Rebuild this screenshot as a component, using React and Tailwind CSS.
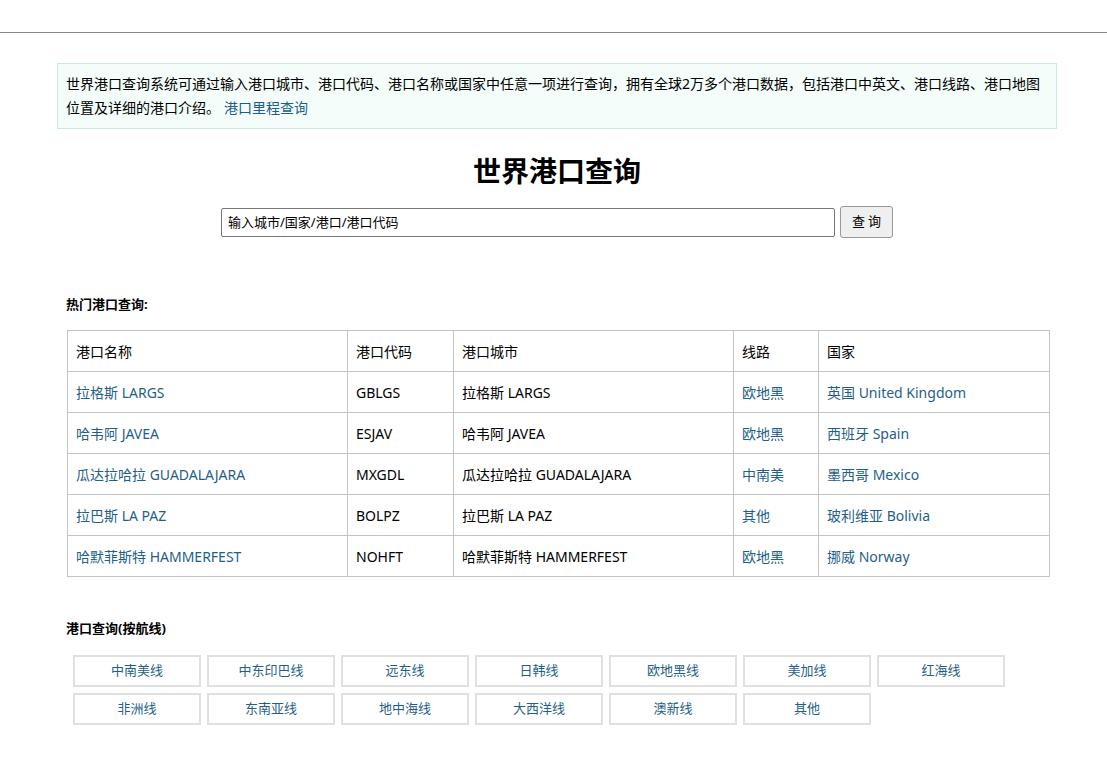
import React from "react";

const rows = [
  ["拉格斯 LARGS", "GBLGS", "拉格斯 LARGS", "欧地黑", "英国 United Kingdom"],
  ["哈韦阿 JAVEA", "ESJAV", "哈韦阿 JAVEA", "欧地黑", "西班牙 Spain"],
  ["瓜达拉哈拉 GUADALAJARA", "MXGDL", "瓜达拉哈拉 GUADALAJARA", "中南美", "墨西哥 Mexico"],
  ["拉巴斯 LA PAZ", "BOLPZ", "拉巴斯 LA PAZ", "其他", "玻利维亚 Bolivia"],
  ["哈默菲斯特 HAMMERFEST", "NOHFT", "哈默菲斯特 HAMMERFEST", "欧地黑", "挪威 Norway"],
];

const routes = [
  "中南美线", "中东印巴线", "远东线", "日韩线", "欧地黑线", "美加线", "红海线",
  "非洲线", "东南亚线", "地中海线", "大西洋线", "澳新线", "其他",
];

const font = { fontFamily: '"Noto Sans", "Noto Sans CJK SC", sans-serif' };

export default function App() {
  return (
    <div className="bg-white min-h-[774px] text-black" style={font}>
      <div className="h-[33px] border-b border-[#888]" />
      <div className="ml-[57px] w-[1000px] pt-[30px]">
        <div className="border border-[#c9eadd] bg-[#f4fdf9] px-[8px] py-[8px] text-[14px] leading-[24px]">
          世界港口查询系统可通过输入港口城市、港口代码、港口名称或国家中任意一项进行查询，拥有全球2万多个港口数据，包括港口中英文、港口线路、港口地图位置及详细的港口介绍。
          <a className="ml-[4px] text-[#1a5f8a]">港口里程查询</a>
        </div>
        <h1 className="mt-[20px] text-center text-[28px] font-bold leading-[44px]">世界港口查询</h1>
        <div className="mt-[13px] flex justify-center items-center gap-[5px]">
          <div className="w-[614px] h-[29px] border border-[#777] rounded-[2px] px-[6px] text-[13px] leading-[27px]">
            输入城市/国家/港口/港口代码
          </div>
          <button className="h-[32px] w-[53px] border border-[#999] rounded-[3px] bg-[#efefef] text-[13px] tracking-[3px] pl-[3px]">
            查询
          </button>
        </div>
        <div className="pl-[9px] mt-[56px]">
          <div className="text-[13px] font-bold leading-[20px]">热门港口查询:</div>
          <table className="ml-[1px] mt-[16px] w-[983px] border-collapse text-[14px]">
            <colgroup>
              <col className="w-[280px]" />
              <col className="w-[106px]" />
              <col className="w-[280px]" />
              <col className="w-[85px]" />
              <col />
            </colgroup>
            <thead>
              <tr className="h-[41px]">
                {["港口名称", "港口代码", "港口城市", "线路", "国家"].map((h) => (
                  <td key={h} className="border border-[#c4c4c4] px-[8px] font-normal">{h}</td>
                ))}
              </tr>
            </thead>
            <tbody>
              {rows.map((r, i) => (
                <tr key={i} className="h-[41px]">
                  <td className="border border-[#c4c4c4] px-[8px] text-[#1f5f88]">{r[0]}</td>
                  <td className="border border-[#c4c4c4] px-[8px]">{r[1]}</td>
                  <td className="border border-[#c4c4c4] px-[8px]">{r[2]}</td>
                  <td className="border border-[#c4c4c4] px-[8px] text-[#1f5f88]">{r[3]}</td>
                  <td className="border border-[#c4c4c4] px-[8px] text-[#1f5f88]">{r[4]}</td>
                </tr>
              ))}
            </tbody>
          </table>
          <div className="mt-[41px] text-[13px] font-bold leading-[20px]">港口查询(按航线)</div>
          <div className="mt-[17px] ml-[7px] grid grid-cols-[repeat(7,128px)] gap-[6px]">
            {routes.map((r) => (
              <div
                key={r}
                className="h-[32px] border-2 border-[#e0e0e0] flex items-center justify-center text-[13px] text-[#1f5f88]"
              >
                {r}
              </div>
            ))}
          </div>
        </div>
      </div>
    </div>
  );
}
